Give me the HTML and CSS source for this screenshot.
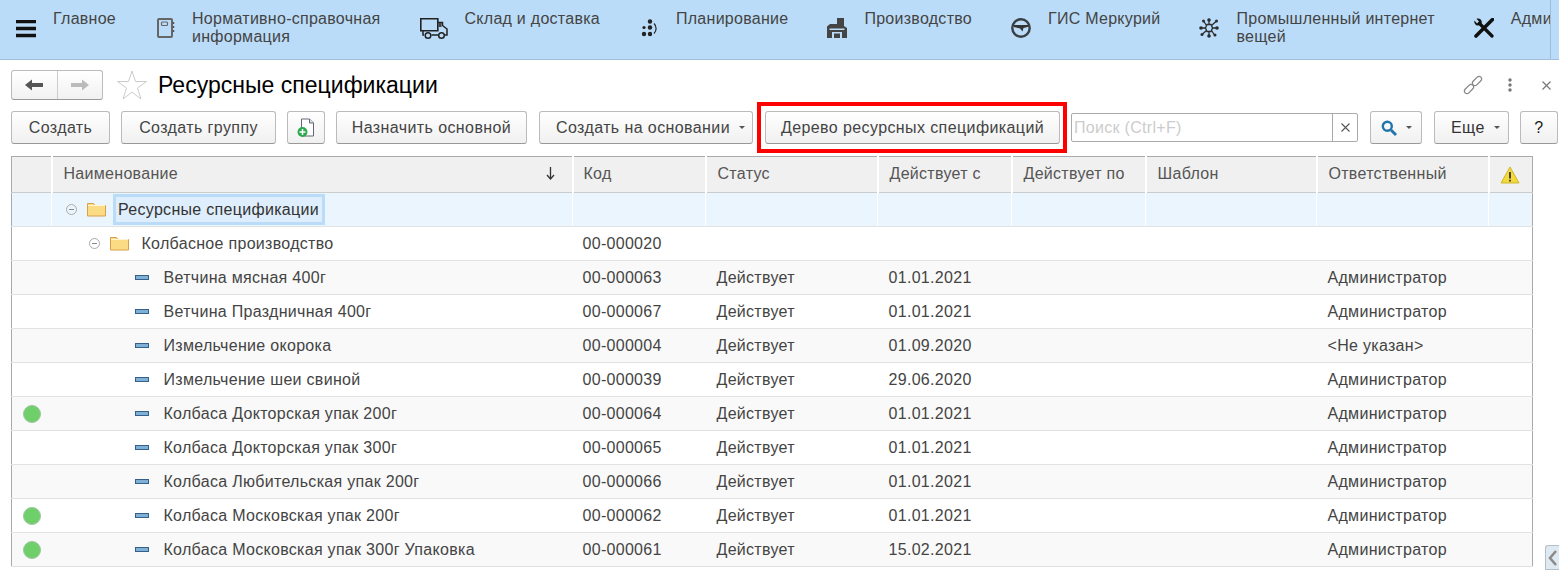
FILE: index.html
```html
<!DOCTYPE html>
<html lang="ru">
<head>
<meta charset="utf-8">
<title>Ресурсные спецификации</title>
<link rel="stylesheet" href="styles.css">
</head>
<body>
<header class="topbar">
  <svg class="burger" width="20" height="18" viewBox="0 0 20 18"><path d="M0 1.500h20M0 8.500h20M0 15.500h20" stroke="#111" stroke-width="3.400"/></svg>
  <nav class="nav">
    <a class="nav-item nav-first">Главное</a>
    <a class="nav-item">
      <svg class="nav-icon" width="18" height="20" viewBox="0 0 18 20"><rect x="1" y="1" width="14" height="18" rx="1" fill="none" stroke="#666" stroke-width="2"/><rect x="4.500" y="4" width="6" height="3.500" rx="1" fill="none" stroke="#666" stroke-width="1.200"/><path d="M16.500 4v2M16.500 8v2M16.500 12v2" stroke="#555" stroke-width="1.500"/></svg>
      <span class="nav-label">Нормативно-справочная<br>информация</span>
    </a>
    <a class="nav-item">
      <svg class="nav-icon" width="28" height="22" viewBox="0 0 28 22"><path d="M.8 12.800V.8h17v12z" fill="none" stroke="#222" stroke-width="1.600"/><path d="M18 4.500h4.500v3l4.500 3.500v6h-2.500M3 13v4h1M11.500 17h6.500" fill="none" stroke="#222" stroke-width="1.500"/><rect x="18.500" y="5" width="3" height="4" fill="#444"/><circle cx="8" cy="17.500" r="2.800" fill="none" stroke="#222" stroke-width="1.500"/><circle cx="21.500" cy="17.500" r="2.800" fill="none" stroke="#222" stroke-width="1.500"/></svg>
      <span class="nav-label">Склад и доставка</span>
    </a>
    <a class="nav-item">
      <svg class="nav-icon" width="20" height="22" viewBox="0 0 20 22"><g fill="#222"><circle cx="11" cy="3.500" r="2.200"/><circle cx="5" cy="9.500" r="1.600"/><circle cx="11" cy="9.500" r="2.200"/><circle cx="5" cy="16" r="2.200"/><circle cx="11" cy="16" r="2.200"/></g><path d="M15 5.500a7 7 0 0 1 0 10" fill="none" stroke="#222" stroke-width="1.200"/></svg>
      <span class="nav-label">Планирование</span>
    </a>
    <a class="nav-item">
      <svg class="nav-icon" width="20" height="20" viewBox="0 0 20 20"><path d="M0 20V8.500l3-2.500h7V0h7v8l3 2v10z" fill="#444"/><path d="M2.500 10.500h15v1.500h-15z" fill="#bbdcf8"/><path d="M5 14h10v6h-2v-4.500H7V20H5z" fill="#bbdcf8"/></svg>
      <span class="nav-label">Производство</span>
    </a>
    <a class="nav-item">
      <svg class="nav-icon" width="20" height="20" viewBox="0 0 20 20"><circle cx="10" cy="10" r="8.700" fill="none" stroke="#3a3f44" stroke-width="2.400"/><path d="M3 7h14.500v1.800l-5 1.200-1 3.500L9 10.500 3 9z" fill="#333"/></svg>
      <span class="nav-label">ГИС Меркурий</span>
    </a>
    <a class="nav-item">
      <svg class="nav-icon" width="20" height="20" viewBox="0 0 20 20"><g stroke="#2b2b2b" stroke-width="1.300"><path d="M10 7V2M10 13v5M7 10H2M13 10h5M7.500 7.500L4.500 3M12.500 12.500l3 4.500M12.500 7.500l5-4.500M7.500 12.500l-4 3.500"/></g><path d="M6.500 10L8 6.500h4L13.500 10 12 13.500H8z" fill="none" stroke="#2b2b2b" stroke-width="1.300"/><g fill="#2b2b2b"><circle cx="10" cy="2" r="1.800"/><circle cx="10" cy="18" r="1.800"/><circle cx="2" cy="10" r="1.800"/><circle cx="18" cy="10" r="1.800"/><circle cx="4.500" cy="3" r="1.500"/><circle cx="17.500" cy="3" r="1.500"/><circle cx="3" cy="16.500" r="1.500"/><circle cx="16" cy="17" r="1.500"/></g></svg>
      <span class="nav-label">Промышленный интернет<br>вещей</span>
    </a>
    <a class="nav-item">
      <svg class="nav-icon" width="20" height="20" viewBox="0 0 20 20"><path d="M18.500 1.500L2 18" stroke="#111" stroke-width="3.600" stroke-linecap="round"/><path d="M5.500 5.500L18 18" stroke="#111" stroke-width="3.200" stroke-linecap="round"/><path d="M.5 2.500L3 5.500 5 3.500 2.500.8C5 0 8 1.500 7.800 4.500 7.700 7 4 8.500 2 7 .5 6 0 4 .5 2.500z" fill="#111"/></svg>
      <span class="nav-label">Администрирование</span>
    </a>
  </nav>
</header>

<main class="page">
  <div class="title-row">
    <div class="history">
      <button class="hist-btn"><svg width="18" height="12" viewBox="0 0 18 12"><path d="M0 6l7-5.500V4h11v4H7v3.500z" fill="#555"/></svg></button>
      <button class="hist-btn"><svg width="18" height="12" viewBox="0 0 18 12"><path d="M18 6l-7-5.500V4H0v4h11v3.500z" fill="#bbb"/></svg></button>
    </div>
    <svg class="star" width="30" height="30" viewBox="0 0 30 30"><path d="M15 1l3.500 10.500H29.500L20.500 18l3.500 11-9-6.800L6 29l3.500-11L.5 11.500H11.500z" fill="#fff" stroke="#ccc"/></svg>
    <h1 class="title">Ресурсные спецификации</h1>
    <div class="title-tools">
      <svg width="20" height="20" viewBox="0 0 20 20"><g fill="none" stroke="#888" stroke-width="1.300"><rect x="-5.500" y="-2.600" width="11" height="5.200" rx="2.600" transform="translate(6 14) rotate(-45)"/><rect x="-5.500" y="-2.600" width="11" height="5.200" rx="2.600" transform="translate(14 6) rotate(-45)"/></g></svg>
      <svg class="tool-dots" width="4" height="14" viewBox="0 0 4 14"><g fill="#777"><circle cx="2" cy="2" r="1.700"/><circle cx="2" cy="7" r="1.700"/><circle cx="2" cy="12" r="1.700"/></g></svg>
      <svg class="tool-close" width="9" height="9" viewBox="0 0 9 9"><path d="M.5.500l8 8M8.500.500l-8 8" stroke="#777" stroke-width="1.200"/></svg>
    </div>
  </div>

  <div class="toolbar">
    <button class="btn btn-create">Создать</button>
    <button class="btn btn-group">Создать группу</button>
    <button class="btn btn-icon">
      <svg width="18" height="20" viewBox="0 0 18 20"><path d="M4.500 1h8l4 4v13h-12z" fill="#fff" stroke="#667"/><path d="M12.500 1v4h4" fill="#dde" stroke="#667"/><circle cx="5.500" cy="14" r="5" fill="#2fa84f"/><path d="M5.500 11v6M2.500 14h6" stroke="#fff" stroke-width="1.500"/></svg>
    </button>
    <button class="btn btn-main">Назначить основной</button>
    <button class="btn btn-base">Создать на основании<i class="caret"></i></button>
    <button class="btn btn-tree">Дерево ресурсных спецификаций</button>
    <div class="search">
      <span class="search-hint">Поиск (Ctrl+F)</span>
      <span class="search-clear"><svg width="9" height="9" viewBox="0 0 9 9"><path d="M.5.500l8 8M8.500.500l-8 8" stroke="#555" stroke-width="1.100"/></svg></span>
    </div>
    <button class="btn btn-find"><svg width="16" height="16" viewBox="0 0 16 16"><circle cx="6.300" cy="6.300" r="4.500" fill="none" stroke="#1f74ac" stroke-width="2.400"/><path d="M10 10l5 5" stroke="#1f74ac" stroke-width="2.800"/></svg><i class="caret"></i></button>
    <button class="btn btn-more">Еще<i class="caret"></i></button>
    <button class="btn btn-help">?</button>
  </div>

  <table class="grid">
    <colgroup><col class="c0"><col class="c1"><col class="c2"><col class="c3"><col class="c4"><col class="c5"><col class="c6"><col class="c7"><col class="c8"></colgroup>
    <thead>
      <tr>
        <th></th>
        <th><div class="th-name"><span>Наименование</span><svg width="9" height="13" viewBox="0 0 9 13"><path d="M4.500 0v11M1 8l3.500 4L8 8" fill="none" stroke="#333" stroke-width="1.300"/></svg></div></th>
        <th>Код</th><th>Статус</th><th>Действует с</th><th>Действует по</th><th>Шаблон</th><th>Ответственный</th>
        <th class="th-warn"><svg width="20" height="18" viewBox="0 0 20 18"><path d="M10 1l9 16H1z" fill="#f3d93a" stroke="#cdb62c" stroke-linejoin="round"/><path d="M10 6v6.500M10 13.800v1.700" stroke="#333" stroke-width="1.800"/></svg></th>
      </tr>
    </thead>
    <tbody>
      <tr class="row-sel">
        <td></td>
        <td><div class="tree lvl0"><svg class="minus" width="11" height="11" viewBox="0 0 11 11"><circle cx="5.500" cy="5.500" r="5" fill="none" stroke="#aaa"/><path d="M3 5.500h5" stroke="#888"/></svg><svg class="folder" width="19" height="15" viewBox="0 0 19 15"><path d="M.5 14V1.500h6l1.500 2h10.500V14z" fill="#fbdc84" stroke="#d9a04c"/><path d="M1 3.500h17" stroke="#fff5d0"/></svg><span class="focus">Ресурсные спецификации</span></div></td>
        <td></td><td></td><td></td><td></td><td></td><td></td><td></td>
      </tr>
      <tr>
        <td></td>
        <td><div class="tree lvl1"><svg class="minus" width="11" height="11" viewBox="0 0 11 11"><circle cx="5.500" cy="5.500" r="5" fill="none" stroke="#aaa"/><path d="M3 5.500h5" stroke="#888"/></svg><svg class="folder" width="19" height="15" viewBox="0 0 19 15"><path d="M.5 14V1.500h6l1.500 2h10.500V14z" fill="#fbdc84" stroke="#d9a04c"/><path d="M1 3.500h17" stroke="#fff5d0"/></svg><span class="tree-text">Колбасное производство</span></div></td>
        <td>00-000020</td><td></td><td></td><td></td><td></td><td></td><td></td>
      </tr>
      <tr class="alt"><td></td><td><div class="tree lvl2"><i class="dash"></i>Ветчина мясная 400г</div></td><td>00-000063</td><td>Действует</td><td>01.01.2021</td><td></td><td></td><td>Администратор</td><td></td></tr>
      <tr><td></td><td><div class="tree lvl2"><i class="dash"></i>Ветчина Праздничная 400г</div></td><td>00-000067</td><td>Действует</td><td>01.01.2021</td><td></td><td></td><td>Администратор</td><td></td></tr>
      <tr class="alt"><td></td><td><div class="tree lvl2"><i class="dash"></i>Измельчение окорока</div></td><td>00-000004</td><td>Действует</td><td>01.09.2020</td><td></td><td></td><td>&lt;Не указан&gt;</td><td></td></tr>
      <tr><td></td><td><div class="tree lvl2"><i class="dash"></i>Измельчение шеи свиной</div></td><td>00-000039</td><td>Действует</td><td>29.06.2020</td><td></td><td></td><td>Администратор</td><td></td></tr>
      <tr class="alt"><td><i class="dot"></i></td><td><div class="tree lvl2"><i class="dash"></i>Колбаса Докторская упак 200г</div></td><td>00-000064</td><td>Действует</td><td>01.01.2021</td><td></td><td></td><td>Администратор</td><td></td></tr>
      <tr><td></td><td><div class="tree lvl2"><i class="dash"></i>Колбаса Докторская упак 300г</div></td><td>00-000065</td><td>Действует</td><td>01.01.2021</td><td></td><td></td><td>Администратор</td><td></td></tr>
      <tr class="alt"><td></td><td><div class="tree lvl2"><i class="dash"></i>Колбаса Любительская упак 200г</div></td><td>00-000066</td><td>Действует</td><td>01.01.2021</td><td></td><td></td><td>Администратор</td><td></td></tr>
      <tr><td><i class="dot"></i></td><td><div class="tree lvl2"><i class="dash"></i>Колбаса Московская упак 200г</div></td><td>00-000062</td><td>Действует</td><td>01.01.2021</td><td></td><td></td><td>Администратор</td><td></td></tr>
      <tr class="alt"><td><i class="dot"></i></td><td><div class="tree lvl2"><i class="dash"></i>Колбаса Московская упак 300г Упаковка</div></td><td>00-000061</td><td>Действует</td><td>15.02.2021</td><td></td><td></td><td>Администратор</td><td></td></tr>
    </tbody>
  </table>
</main>
<div class="side-tab"><svg width="9" height="16" viewBox="0 0 9 16"><path d="M8 1L2 8l6 7" fill="none" stroke="#8a8a8a" stroke-width="2.500"/></svg></div>
</body>
</html>
```
FILE: styles.css
```css
* { box-sizing: border-box; }
html, body { margin: 0; height: 570px; overflow: hidden; background: #fff; }
body { font-family: "Liberation Sans", Arial, sans-serif; font-size: 16px; letter-spacing: .3px; color: #333; position: relative; width: 1559px; }
.topbar { height: 60px; background: #bbdcf8; border-bottom: 1px solid #a0bfdc; display: flex; align-items: flex-start; padding-left: 16px; }
.burger { margin-top: 20px; flex: none; }
.nav { display: flex; margin-left: 17px; width: 1498px; height: 59px; overflow: hidden; border-right: 1px solid #9fbcd6; }
.nav-item { display: flex; align-items: flex-start; margin-right: 39px; flex: none; color: #444; letter-spacing: .27px; line-height: 18px; padding-top: 10px; }
.nav-first { margin-right: 41px; }
.nav-icon { margin-top: 8px; margin-right: 17px; flex: none; }
.nav-label { white-space: nowrap; }
.page { position: relative; }
.title-row { display: flex; align-items: center; height: 30px; margin-top: 10px; padding-left: 11px; }
.history { display: flex; width: 92px; height: 30px; border: 1px solid #bbb; border-bottom-color: #999; border-radius: 3px; background: linear-gradient(#fff, #f1f1f1); }
.hist-btn { flex: 1; border: 0; background: none; padding: 0; display: flex; align-items: center; justify-content: center; }
.hist-btn + .hist-btn { border-left: 1px solid #ccc; }
.star { margin-left: 14px; flex: none; }
.title { margin: 0 0 0 11px; font-size: 23px; letter-spacing: .02px; font-weight: 400; color: #000; line-height: 30px; }
.title-tools { margin-left: auto; display: flex; align-items: center; padding-right: 8px; }
.tool-dots { margin-left: 25px; }
.tool-close { margin-left: 30px; }
.toolbar { display: flex; align-items: flex-start; margin-top: 11px; padding-left: 11px; height: 34px; }
.btn { height: 33px; border: 1px solid #bbb; border-bottom-color: #999; border-radius: 3px; background: linear-gradient(#fff, #f0f0f0); font: inherit; letter-spacing: .4px; color: #444; padding: 0; flex: none; display: flex; align-items: center; justify-content: center; position: relative; }
.btn-create { width: 99px; }
.btn-group { width: 155px; margin-left: 11px; }
.btn-icon { width: 38px; margin-left: 11px; }
.btn-main { width: 191px; margin-left: 11px; }
.btn-base { width: 214px; margin-left: 12px; justify-content: flex-start; padding-left: 16px; }
.btn-tree { width: 295px; margin-left: 12px; }
.btn-tree::after { content: ""; position: absolute; left: -9px; top: -10px; right: -8px; bottom: -10px; border: 4px solid #f00; }
.caret { width: 0; height: 0; border: 3px solid transparent; border-top: 3px solid #555; border-bottom: 0; margin-left: 9px; }
.search { width: 287px; height: 29px; margin-left: 11px; margin-top: 2px; border: 1px solid #aaa; border-radius: 2px; background: #fff; display: flex; align-items: center; flex: none; }
.search-hint { flex: 1; color: #ccc; padding-left: 2px; }
.search-clear { width: 25px; height: 27px; border-left: 1px solid #aaa; display: flex; align-items: center; justify-content: center; }
.btn-find { width: 52px; margin-left: 12px; }
.btn-more { width: 75px; margin-left: 12px; color: #333; justify-content: flex-start; padding-left: 16px; }
.btn-help { width: 38px; margin-left: 11px; color: #222; }
.grid { margin: 11px 0 0 11px; width: 1521px; table-layout: fixed; border-collapse: collapse; border-top: 1px solid #aaa; border-left: 1px solid #aaa; border-right: 1px solid #aaa; }
.c0 { width: 40px; } .c1 { width: 521px; } .c2 { width: 133px; } .c3 { width: 172px; } .c4 { width: 134px; } .c5 { width: 134px; } .c6 { width: 171px; } .c7 { width: 172px; } .c8 { width: 44px; }
.grid th { height: 36px; background: #f0f0f0; font-weight: 400; color: #555; text-align: left; padding: 0 9px 2px 11px; border-left: 2px solid #fff; border-bottom: 1px solid #ccc; white-space: nowrap; }
.grid th:first-child { border-left: 0; }
.grid th:nth-child(3), .grid td:nth-child(3) { padding-left: 10px; }
.grid th:nth-child(2) { padding-left: 10px; }
.th-name { display: flex; justify-content: space-between; align-items: center; padding: 0 8px 0 1px; }
.th-warn { padding: 0 0 0 10px !important; }
.th-warn svg { display: block; }
.grid td { height: 34px; padding: 0 9px 0 11px; border-bottom: 1px solid #e2e2e2; white-space: nowrap; color: #444; }
.grid td:first-child { padding: 0 0 0 11px; }
.alt td { background: #f9f9f9; }
.row-sel td { background: #ebf5fd; border-left: 1px solid #fff; }
.row-sel td:first-child { border-left: 0; }
.tree { display: flex; align-items: center; height: 33px; }
.lvl0 { padding-left: 3px; }
.lvl1 { padding-left: 26px; }
.lvl2 { padding-left: 72px; }
.minus { flex: none; }
.folder { flex: none; margin-left: 10px; }
.focus { margin-left: 7px; padding: 0 3px 0 2px; height: 31px; line-height: 25px; border: 3px solid #bbdcf8; background: #deeefc; color: #333; }
.tree-text { margin-left: 13px; }
.dash { width: 14px; height: 5px; background: #7fb0d6; border: 1px solid #35608a; margin-right: 15px; flex: none; }
.dot { display: block; width: 18px; height: 18px; border-radius: 50%; background: #6fcf6b; border: 1px solid #9ec69b; }
.side-tab { position: absolute; right: 0; bottom: 0; width: 14px; height: 25px; background: #dfe9f2; border: 1px solid #b5bfc9; border-right: 0; border-radius: 3px 0 0 0; display: flex; align-items: center; justify-content: center; }
```
